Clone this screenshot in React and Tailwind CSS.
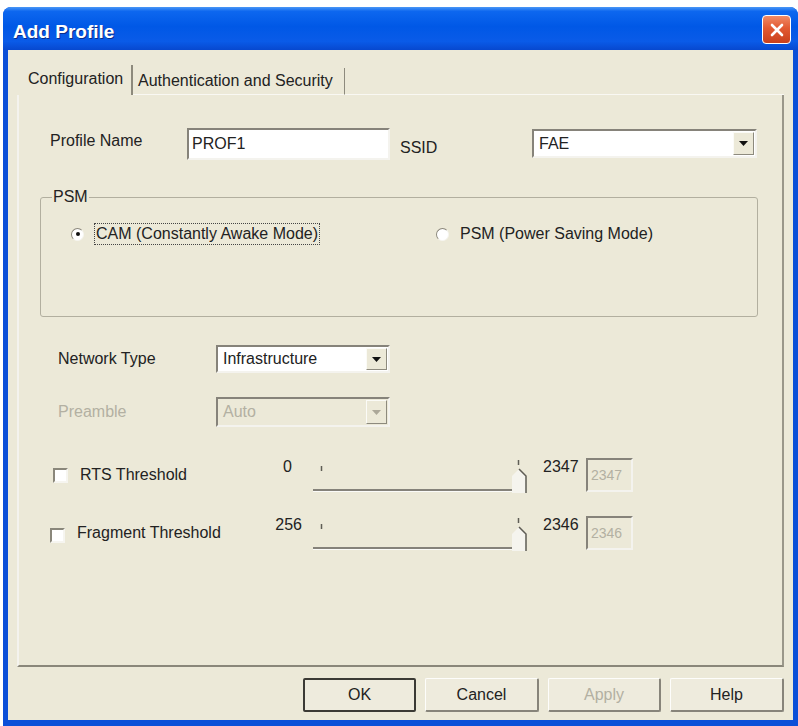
import React from 'react';

function DropArrow({ disabled }) {
  return (
    <div className="flex h-full w-[21px] items-center justify-center border border-t-[#fbfbf7] border-l-[#fbfbf7] border-r-[#8d8a7e] border-b-[#8d8a7e] bg-[#ece9d8]">
      <svg width="9" height="5" viewBox="0 0 9 5">
        <path d="M0 0 L9 0 L4.5 5 Z" fill={disabled ? '#aca899' : '#111'} />
      </svg>
    </div>
  );
}

function Combo({ value, width, height, disabled }) {
  return (
    <div
      className={`flex ${width} ${height} items-stretch border-2 border-t-[#86837a] border-l-[#86837a] border-r-[#f4f3ee] border-b-[#f4f3ee] ${disabled ? 'bg-[#ece9d8]' : 'bg-white'}`}
    >
      <div className={`flex flex-1 items-center pl-[5px] leading-[18px] ${disabled ? 'text-[#b3b0a2]' : ''}`}>{value}</div>
      <div className="py-[1px] pr-[1px]">
        <DropArrow disabled={disabled} />
      </div>
    </div>
  );
}

function Radio({ checked }) {
  return (
    <div className="flex h-[13px] w-[13px] items-center justify-center rounded-full border border-t-[#8a877b] border-l-[#8a877b] border-r-[#f6f5f0] border-b-[#f6f5f0] bg-white">
      {checked && <div className="h-[4px] w-[4px] rounded-full bg-[#111]" />}
    </div>
  );
}

function Checkbox() {
  return (
    <div className="h-[15px] w-[15px] border-2 border-t-[#8a877b] border-l-[#8a877b] border-r-[#f6f5f0] border-b-[#f6f5f0] bg-white" />
  );
}

function Slider() {
  return (
    <svg width="215" height="35" viewBox="0 0 215 35">
      <line x1="8.5" y1="8" x2="8.5" y2="13" stroke="#5f5d55" strokeWidth="1.5" />
      <line x1="205.5" y1="2" x2="205.5" y2="7" stroke="#5f5d55" strokeWidth="1.5" />
      <rect x="0" y="31" width="202" height="2" fill="#85827a" />
      <rect x="0" y="33" width="202" height="1" fill="#fbfbf8" />
      <path d="M199 18 L206 11 L213 18 L213 35 L199 35 Z" fill="#f5f4ee" />
      <path d="M206 11 L213 18 L213 35" fill="none" stroke="#5e5c54" strokeWidth="1.5" />
    </svg>
  );
}

function ValueBox({ value }) {
  return (
    <div className="flex h-[34px] w-[47px] items-center border-2 border-t-[#86837a] border-l-[#86837a] border-r-[#f4f3ee] border-b-[#f4f3ee] bg-[#ece9d8] pl-[3px] text-[14px] leading-[16px] text-[#b3b0a2]">
      {value}
    </div>
  );
}

function Threshold({ label, min, max, left, leftWidth, minWidth, gap, checkTop }) {
  return (
    <div className={`flex items-start ${left}`}>
      <div className={`flex ${leftWidth} items-start`}>
        <div className={checkTop}>
          <Checkbox />
        </div>
        <span className="ml-[12px] mt-[8px] leading-[18px]">{label}</span>
      </div>
      <span className={`${minWidth} text-right leading-[18px]`}>{min}</span>
      <div className={gap}>
        <Slider />
      </div>
      <span className="ml-[15px] w-[36px] leading-[18px]">{max}</span>
      <div className="ml-[7px]">
        <ValueBox value={max} />
      </div>
    </div>
  );
}

function Button({ children, primary, disabled, width }) {
  return (
    <button
      className={`flex h-[34px] ${width} items-center justify-center rounded-[2px] ${
        primary
          ? 'border-2 border-[#3b3a35]'
          : 'border border-t-[#fdfdfb] border-l-[#fdfdfb] border-r-[#87847a] border-b-[#87847a] border-r-2 border-b-2'
      } bg-[#eeebdd] leading-[18px] ${disabled ? 'text-[#b3b0a2]' : 'text-[#222]'}`}
    >
      {children}
    </button>
  );
}

export default function App() {
  return (
    <div className="min-h-screen bg-white pl-[3px] pt-[7px] font-['Liberation_Sans',Arial,sans-serif] text-[16px] text-[#222]">
      <div className="flex h-[719px] w-[795px] flex-col overflow-hidden rounded-t-[8px] bg-[#0b4fd8]">
        {/* title bar */}
        <div className="flex h-[43px] items-center justify-between bg-[linear-gradient(180deg,#4a97f6_0%,#0d67ef_10%,#0058e6_45%,#0a5be8_80%,#0748cf_100%)] pl-[10px] pr-[7px]">
          <span className="pt-[8px] text-[19px] font-bold text-white [text-shadow:1px_1px_0_#0b2d8a]">Add Profile</span>
          <div className="mt-[2px] flex h-[29px] w-[29px] items-center justify-center rounded-[4px] border border-white bg-[linear-gradient(180deg,#f08a66_0%,#e25a32_45%,#c9401c_100%)]">
            <svg width="16" height="16" viewBox="0 0 16 16">
              <path d="M3 3 L13 13 M13 3 L3 13" stroke="white" strokeWidth="2.6" strokeLinecap="round" />
            </svg>
          </div>
        </div>

        {/* body */}
        <div className="mx-[5px] mb-[6px] flex flex-1 flex-col bg-[#ece9d8] px-[9px] pb-[8px] pt-[10px]">
          {/* tabs */}
          <div className="flex h-[35px] items-end">
            <div className="flex h-[30px] w-[116px] items-center border-r-2 border-[#8d8a7d] pb-[2px] pl-[11px]">Configuration</div>
            <div className="flex h-[27px] w-[212px] items-center border-b border-r border-b-[#f9f8f3] border-r-[#8d8a7d] pb-[1px] pl-[5px]">
              Authentication and Security
            </div>
            <div className="h-[1px] flex-1 bg-[#f9f8f3]" />
          </div>

          {/* tab page */}
          <div className="flex h-[572px] flex-col border-2 border-l-[#f4f3ee] border-t-0 border-r-[#9a978a] border-b-[#8a877a]">
            {/* profile row */}
            <div className="mt-[33px] flex items-start pl-[31px]">
              <span className="mt-[4px] w-[137px] leading-[18px]">Profile Name</span>
              <div className="flex h-[32px] w-[203px] items-center border-2 border-t-[#86837a] border-l-[#86837a] border-r-[#f4f3ee] border-b-[#f4f3ee] bg-white pl-[3px] leading-[18px]">
                PROF1
              </div>
              <span className="ml-[10px] mt-[11px] w-[132px] leading-[18px]">SSID</span>
              <div className="mt-[1px]">
                <Combo value="FAE" width="w-[225px]" height="h-[29px]" />
              </div>
            </div>

            {/* PSM group */}
            <fieldset className="ml-[21px] mt-[28px] h-[129px] w-[718px] rounded-[3px] border border-[#b2af9f]">
              <legend className="ml-[11px] px-[1px] leading-[18px]">PSM</legend>
              <div className="mt-[16px] flex h-[24px] items-center pl-[30px]">
                <div className="flex w-[365px] items-center">
                  <Radio checked />
                  <span className="ml-[10px] border border-dotted border-[#444] px-[1px] leading-[20px]">CAM (Constantly Awake Mode)</span>
                </div>
                <Radio />
                <span className="ml-[11px] leading-[18px]">PSM (Power Saving Mode)</span>
              </div>
            </fieldset>

            {/* network type */}
            <div className="mt-[28px] flex items-center pl-[39px]">
              <span className="w-[158px] leading-[18px]">Network Type</span>
              <Combo value="Infrastructure" width="w-[174px]" height="h-[28px]" />
            </div>

            {/* preamble */}
            <div className="mt-[24px] flex items-center pl-[39px]">
              <span className="w-[158px] leading-[18px] text-[#b3b0a2]">Preamble</span>
              <Combo value="Auto" width="w-[174px]" height="h-[30px]" disabled />
            </div>

            {/* thresholds */}
            <div className="mt-[31px]">
              <Threshold
                label="RTS Threshold"
                min="0"
                max="2347"
                left="pl-[34px]"
                leftWidth="w-[209px]"
                minWidth="w-[30px]"
                gap="ml-[21px]"
                checkTop="mt-[10px]"
              />
            </div>
            <div className="mt-[23px]">
              <Threshold
                label="Fragment Threshold"
                min="256"
                max="2346"
                left="pl-[31px]"
                leftWidth="w-[212px]"
                minWidth="w-[40px]"
                gap="ml-[11px]"
                checkTop="mt-[12px]"
              />
            </div>
          </div>

          {/* buttons */}
          <div className="mt-[11px] flex justify-end gap-[9px]">
            <Button primary width="w-[113px]">OK</Button>
            <Button width="w-[114px]">Cancel</Button>
            <Button disabled width="w-[113px]">Apply</Button>
            <Button width="w-[114px]">Help</Button>
          </div>
        </div>
      </div>
    </div>
  );
}
